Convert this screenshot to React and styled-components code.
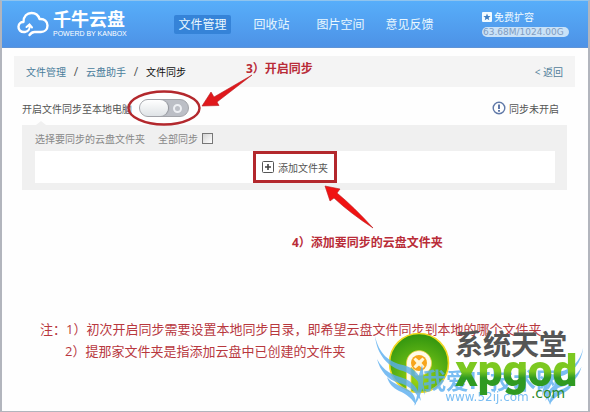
import React, { useState } from "react";
import styled, { createGlobalStyle } from "styled-components";

const NAV_ITEMS = ["文件管理", "回收站", "图片空间", "意见反馈"];

export default function App() {
  const [syncOn, setSyncOn] = useState(false);
  const [syncAll, setSyncAll] = useState(false);

  return (
    <>
      <GlobalStyle />
      <Window>
        <Header>
          <Brand>
            <CloudLogo />
            <BrandText>
              <BrandName>千牛云盘</BrandName>
              <BrandTagline>POWERD BY KANBOX</BrandTagline>
            </BrandText>
          </Brand>
          <Nav>
            {NAV_ITEMS.map((item, i) => (
              <NavLink key={item} href="#" $active={i === 0}>
                {item}
              </NavLink>
            ))}
          </Nav>
          <Quota>
            <UpgradeLink href="#">
              <StarSvg />
              免费扩容
            </UpgradeLink>
            <QuotaBar>63.68M/1024.00G</QuotaBar>
          </Quota>
        </Header>

        <Content>
          <Breadcrumb>
            <Crumb href="#">文件管理</Crumb>
            <Slash>/</Slash>
            <Crumb href="#">云盘助手</Crumb>
            <Slash>/</Slash>
            <Current>文件同步</Current>
            <BackLink href="#">&lt; 返回</BackLink>
          </Breadcrumb>

          <Body>
            <SyncRow>
              <label htmlFor="sync">开启文件同步至本地电脑</label>
              <ToggleWrap>
                <Toggle
                  id="sync"
                  type="checkbox"
                  checked={syncOn}
                  onChange={() => setSyncOn(!syncOn)}
                />
                <ToggleMark />
                <Callout $left={107} $top={-39}>
                  3）开启同步
                </Callout>
              </ToggleWrap>
              <Status>
                <WarnSvg />
                同步未开启
              </Status>
            </SyncRow>

            <Panel>
              <PanelHead>
                <span>选择要同步的云盘文件夹</span>
                <AllLabel>
                  全部同步
                  <Checkbox
                    type="checkbox"
                    checked={syncAll}
                    onChange={() => setSyncAll(!syncAll)}
                  />
                </AllLabel>
              </PanelHead>
              <FolderBox>
                <AddWrap>
                  <AddButton type="button">
                    <PlusSvg />
                    添加文件夹
                  </AddButton>
                  <AddMark />
                  <Callout $left={39} $top={83}>
                    4）添加要同步的云盘文件夹
                  </Callout>
                </AddWrap>
              </FolderBox>
            </Panel>
          </Body>

          <Notes>
            <p>
              注：1）初次开启同步需要设置本地同步目录，即希望云盘文件同步到本地的哪个文件夹
            </p>
            <SecondNote>2）提那家文件夹是指添加云盘中已创建的文件夹</SecondNote>
          </Notes>
        </Content>

        <GreenMark>
          <CoinLogo />
          <GreenText>
            <GreenTitle>系统天堂</GreenTitle>
            <GreenName>xpgod</GreenName>
            <GreenCom>.com</GreenCom>
          </GreenText>
        </GreenMark>
        <BlueMark>
          <Wings />
          <BlueTitle>我爱IT技术网</BlueTitle>
          <BlueUrl>www.52ij.com</BlueUrl>
        </BlueMark>
      </Window>
    </>
  );
}

function CloudLogo() {
  return (
    <svg width="32" height="26" viewBox="0 0 32 26" fill="none">
      <path
        d="M8 21 C3.500 21.500 1.200 18.500 1.500 15.500 C1.800 12.500 4 10.800 6.500 11 C6.500 5 10 2 14.500 2 C18.500 2 21.500 4.500 22.500 8 C27.500 7.500 30.500 10.500 30.500 14.500 C30.500 18.500 27.500 21 24 21 L17.500 21 C15.500 21 14 22 12.500 24"
        stroke="#fff"
        strokeWidth="2.400"
        strokeLinecap="round"
        strokeLinejoin="round"
      />
      <path
        d="M8 21 C11.500 20.500 13 18 12.500 14.500 M9.500 16 L12.500 13.500 L15 16.500"
        stroke="#fff"
        strokeWidth="2"
        strokeLinecap="round"
      />
    </svg>
  );
}

function StarSvg() {
  return (
    <svg width="10" height="10" viewBox="0 0 10 10">
      <rect width="10" height="10" rx="1" fill="#f2fbff" />
      <path
        d="M5 1.500 L6 4 L8.600 4.100 L6.600 5.700 L7.300 8.300 L5 6.800 L2.700 8.300 L3.400 5.700 L1.400 4.100 L4 4 Z"
        fill="#3f7fc4"
      />
    </svg>
  );
}

function WarnSvg() {
  return (
    <svg width="14" height="14" viewBox="0 0 14 14" fill="none">
      <circle cx="7" cy="7" r="5.800" stroke="#6079a8" strokeWidth="1.400" />
      <path d="M7 3.400 V8" stroke="#4f6aa0" strokeWidth="1.800" />
      <path d="M7 9 V10.800" stroke="#4f6aa0" strokeWidth="1.800" />
    </svg>
  );
}

function PlusSvg() {
  return (
    <svg width="12" height="12" viewBox="0 0 12 12" fill="none">
      <rect x=".5" y=".5" width="11" height="11" rx="1" stroke="#555" />
      <path d="M6 3 V9 M3 6 H9" stroke="#444" strokeWidth="1.600" />
    </svg>
  );
}

// red ellipse round the switch, with the arrow that points at it
function ToggleMark() {
  return (
    <ToggleMarkSvg width="130" height="60" viewBox="0 0 130 60">
      <ellipse
        cx="40"
        cy="38"
        rx="35.500"
        ry="16.500"
        fill="none"
        stroke="#b3282d"
        strokeWidth="2.400"
      />
      <path
        d="M78 36 L87 22 L90 27 L128 5 L93 32 L95 35.500 Z"
        fill="#e0181c"
        stroke="#b81e22"
        strokeWidth=".6"
      />
    </ToggleMarkSvg>
  );
}

function AddMark() {
  return (
    <AddMarkSvg width="52" height="46" viewBox="0 0 52 46">
      <path
        d="M1 1 L16 4 L13 8 Q30 22 49 43 Q26 28 10 13 L6 16 Z"
        fill="#f01212"
        stroke="#b81e22"
        strokeWidth=".6"
      />
    </AddMarkSvg>
  );
}

function CoinLogo() {
  return (
    <svg width="62" height="62" viewBox="0 0 62 62">
      <defs>
        <radialGradient id="ball" cx=".5" cy=".75" r=".75">
          <stop offset="0" stopColor="#a6d80c" />
          <stop offset=".5" stopColor="#5fb414" />
          <stop offset="1" stopColor="#2f930f" />
        </radialGradient>
      </defs>
      <circle cx="31" cy="31" r="29.500" fill="url(#ball)" stroke="#f0d820" strokeWidth="1.600" />
      <path
        d="M18.500 58 V31 A12.500 12.500 0 1 1 27 43 L27 39 L23 35 V60 Z"
        fill="#fffbe8"
        stroke="#f3d64a"
        strokeWidth=".8"
      />
      <circle cx="31" cy="31" r="8" fill="#f7a51c" />
      <path
        d="M31 28.500 L34.500 25.500 L36.500 27.500 L33.500 31 L36.500 34.500 L34.500 36.500 L31 33.500 L27.500 36.500 L25.500 34.500 L28.500 31 L25.500 27.500 L27.500 25.500 Z"
        fill="#fff6d8"
      />
    </svg>
  );
}

function Wing() {
  return (
    <>
      <path d="M1 1 C5 19 15 27 29 30 C42 33 51 45 51 60 C47 48 40 40 29 36 C14 32 3 20 1 1 Z" />
      <path d="M3 24 C10 37 19 40 29 43 C38 46 45 53 47 66 C40 54 33 50 25 48 C14 45 6 36 3 24 Z" />
      <path d="M13 42 C19 49 27 51 33 54 C40 58 42 63 42 70 C36 61 30 58 25 56 C19 53 15 49 13 42 Z" />
      <path d="M48 30 C51 42 50 58 40 71 C44 60 45 50 44 43 Z" />
    </>
  );
}

function Wings() {
  return (
    <WingsSvg width="210" height="72" viewBox="0 0 210 72" fill="#5aaef0">
      <Wing />
      <g transform="translate(210 12) scale(-.82 .82)">
        <Wing />
      </g>
    </WingsSvg>
  );
}

const GlobalStyle = createGlobalStyle`
  * {
    box-sizing: border-box;
  }
  body {
    margin: 0;
    background: #fff;
    font-family: "Open Sans", "Noto Sans CJK SC", sans-serif;
    font-size: 10px;
    color: #555;
  }
  p {
    margin: 0;
  }
  a {
    text-decoration: none;
  }
  svg {
    flex: none;
    display: block;
  }
`;

const Window = styled.div`
  position: relative;
  min-height: 100vh;
  overflow: hidden;
  background: #fefefe;
  border: 2px solid #b2b5bd;
  border-top: 1px solid #8fc4ee;
  border-bottom-width: 1px;
`;

const Header = styled.header`
  display: flex;
  align-items: center;
  height: 47px;
  padding: 0 19px 0 15px;
  background: linear-gradient(#57aefa, #4d92e6);
  border-bottom: 1px solid #5f93d6;
`;

const Brand = styled.div`
  display: flex;
  flex: none;
  align-items: center;
  gap: 4px;
  width: 151px;
  color: #fff;
`;

const BrandText = styled.div`
  display: flex;
  flex-direction: column;
  white-space: nowrap;
`;

const BrandName = styled.strong`
  font-size: 18px;
  line-height: 20px;
`;

const BrandTagline = styled.span`
  font-family: "Liberation Sans", sans-serif;
  font-size: 7px;
  line-height: 10px;
`;

const Nav = styled.nav`
  display: grid;
  grid-template-columns: repeat(4, 69px);
  justify-items: center;
`;

const NavLink = styled.a`
  padding: 0 4px;
  border-radius: 2px;
  background: ${(p) => (p.$active ? "#3583d8" : "none")};
  color: #eaf8ff;
  font-size: 12px;
  line-height: 19px;
`;

const Quota = styled.div`
  display: flex;
  flex-direction: column;
  gap: 4px;
  width: 87px;
  margin-left: auto;
`;

const UpgradeLink = styled.a`
  display: flex;
  align-items: center;
  gap: 2px;
  color: #f2fbff;
  line-height: 12px;
`;

const QuotaBar = styled.div`
  padding-left: 1px;
  border-radius: 5px;
  background: #c9e2f8;
  color: #7f9cc0;
  font-family: "DejaVu Sans", sans-serif;
  font-size: 9px;
  line-height: 10px;
  white-space: nowrap;
`;

const Content = styled.main`
  padding: 8px 13px 0 12px;
`;

const Breadcrumb = styled.nav`
  display: flex;
  align-items: center;
  height: 31px;
  padding: 0 12px;
  background: #f4f4f4;
`;

const Crumb = styled.a`
  color: #4a7d9c;
`;

const Slash = styled.span`
  width: 20px;
  font-size: 12px;
  text-align: center;
`;

const Current = styled.span`
  color: #111;
`;

const BackLink = styled.a`
  margin-left: auto;
  color: #52809a;
`;

const Body = styled.section`
  padding: 0 8px;
`;

const SyncRow = styled.div`
  display: flex;
  align-items: center;
  height: 38px;
  padding-top: 4px;
`;

const ToggleWrap = styled.div`
  position: relative;
  z-index: 1;
  height: 18px;
  margin-left: 7px;
`;

const Toggle = styled.input`
  appearance: none;
  display: flex;
  align-items: center;
  justify-content: space-between;
  width: 50px;
  height: 18px;
  margin: 0;
  padding-right: 6px;
  border: 1px solid #a3a5aa;
  border-radius: 9px;
  background: #bcbfc6;
  &::before {
    content: "";
    width: 28px;
    height: 16px;
    border-radius: 8px;
    background: linear-gradient(#fff, #dfe3e6);
    box-shadow: 1px 0 1px #8d9096;
  }
  &::after {
    content: "";
    box-sizing: border-box;
    width: 9px;
    height: 9px;
    border: 2px solid #eef0f4;
    border-radius: 50%;
  }
  &:checked {
    flex-direction: row-reverse;
    padding: 0 0 0 6px;
    background: #6fb1ee;
  }
`;

const ToggleMarkSvg = styled.svg`
  position: absolute;
  left: -15px;
  top: -29px;
  pointer-events: none;
`;

const Callout = styled.strong`
  position: absolute;
  left: ${(p) => p.$left}px;
  top: ${(p) => p.$top}px;
  color: #b92c38;
  font-size: 12px;
  line-height: 18px;
  white-space: nowrap;
`;

const Status = styled.div`
  display: flex;
  align-items: center;
  gap: 3px;
  margin-left: auto;
  padding-right: 8px;
`;

const Panel = styled.div`
  position: relative;
  padding: 0 12px 7px 13px;
  background: #f0f0f0;
  &::before {
    content: "";
    position: absolute;
    left: 14px;
    top: -4px;
    border: 5px solid transparent;
    border-top: 0;
    border-bottom: 4px solid #f0f0f0;
  }
`;

const PanelHead = styled.div`
  display: flex;
  align-items: center;
  gap: 13px;
  height: 26px;
  color: #888;
`;

const AllLabel = styled.label`
  display: flex;
  align-items: center;
  gap: 4px;
`;

const Checkbox = styled.input`
  appearance: none;
  width: 11px;
  height: 11px;
  margin: 0;
  border: 1px solid #777;
  background: linear-gradient(135deg, #d4d4d4, #fff);
  &:checked {
    background: #4d92e6;
  }
`;

const FolderBox = styled.div`
  display: flex;
  justify-content: center;
  background: #fff;
`;

const AddWrap = styled.div`
  position: relative;
`;

const AddButton = styled.button`
  display: flex;
  align-items: center;
  gap: 4px;
  height: 32px;
  padding: 0 6px;
  border: 3px solid #b3282d;
  background: #fff;
  color: #555;
  font: inherit;
`;

const AddMarkSvg = styled.svg`
  position: absolute;
  left: 71px;
  top: 34px;
`;

const Notes = styled.section`
  padding: 128px 0 0 26px;
  color: #b8383e;
  font-size: 13px;
  line-height: 22px;
`;

const SecondNote = styled.p`
  padding-left: 25px;
`;

const GreenMark = styled.div`
  position: absolute;
  right: 8px;
  bottom: 9px;
  display: flex;
  gap: 5px;
  width: 192px;
  height: 70px;
`;

const GreenText = styled.div`
  z-index: 2;
  display: flex;
  flex-direction: column;
  white-space: nowrap;
`;

const GreenTitle = styled.strong`
  z-index: 1;
  color: #555;
  font-size: 28px;
  line-height: 24px;
`;

const GreenName = styled.strong`
  margin-top: -8px;
  padding: 8px 0 12px;
  background: linear-gradient(#7cc820 46%, #2f9a22 60%);
  background-clip: text;
  color: transparent;
  font-family: Roboto, sans-serif;
  font-size: 44px;
  font-weight: 900;
  line-height: 30px;
`;

const GreenCom = styled.span`
  align-self: flex-end;
  margin: -13px 12px 0 0;
  color: #2b8a2b;
  font-family: "DejaVu Sans", sans-serif;
  font-size: 14px;
  line-height: 16px;
`;

const BlueMark = styled.div`
  position: absolute;
  right: 4px;
  bottom: 4px;
  display: flex;
  flex-direction: column;
  align-items: center;
  justify-content: flex-end;
  width: 210px;
  height: 72px;
  padding: 0 0 4px 16px;
  color: #5aaef0;
  opacity: 0.8;
  pointer-events: none;
`;

const WingsSvg = styled.svg`
  position: absolute;
  left: 0;
  top: 0;
`;

const BlueTitle = styled.strong`
  padding-left: 8px;
  font-size: 23px;
  line-height: 22px;
  white-space: nowrap;
`;

const BlueUrl = styled.span`
  font-family: "DejaVu Sans", sans-serif;
  font-size: 12px;
  line-height: 12px;
`;
